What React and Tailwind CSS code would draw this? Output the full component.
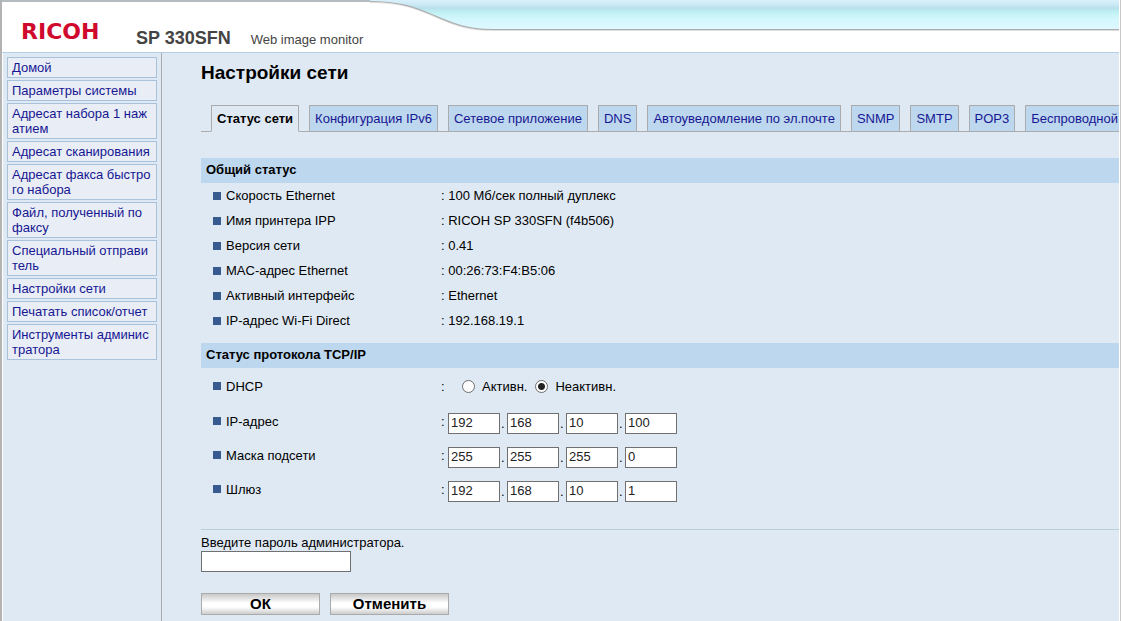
import React, { useState } from 'react';

const menuItems = [
    ['Домой'],
    ['Параметры системы'],
    ['Адресат набора 1 наж', 'атием'],
    ['Адресат сканирования'],
    ['Адресат факса быстро', 'го набора'],
    ['Файл, полученный по', 'факсу'],
    ['Специальный отправи', 'тель'],
    ['Настройки сети'],
    ['Печатать список/отчет'],
    ['Инструменты админис', 'тратора'],
];

const tabs = [
    'Статус сети',
    'Конфигурация IPv6',
    'Сетевое приложение',
    'DNS',
    'Автоуведомление по эл.почте',
    'SNMP',
    'SMTP',
    'POP3',
    'Беспроводной',
];

const statusRows = [
    ['Скорость Ethernet', '100 Мб/сек полный дуплекс'],
    ['Имя принтера IPP', 'RICOH SP 330SFN (f4b506)'],
    ['Версия сети', '0.41'],
    ['MAC-адрес Ethernet', '00:26:73:F4:B5:06'],
    ['Активный интерфейс', 'Ethernet'],
    ['IP-адрес Wi-Fi Direct', '192.168.19.1'],
];

const addressRows = [
    { key: 'ip', label: 'IP-адрес', value: ['192', '168', '10', '100'] },
    { key: 'mask', label: 'Маска подсети', value: ['255', '255', '255', '0'] },
    { key: 'gateway', label: 'Шлюз', value: ['192', '168', '10', '1'] },
];

const Header = () => (
    <header className="relative h-[53px] border-t-2 border-b border-t-[#b4bcc0] border-b-[#b5cfe8] bg-white">
        <div className="absolute -top-0.5 right-0 left-[368px] flex h-8">
            <svg width="122" height="32" viewBox="0 0 122 32" className="shrink-0">
                <defs>
                    <linearGradient id="sky" x1="0" y1="0" x2="0" y2="1">
                        <stop offset="0" stopColor="#d9f0fc" />
                        <stop offset="0.15" stopColor="#cdeaf6" />
                        <stop offset="0.28" stopColor="#b9e1ec" />
                        <stop offset="0.45" stopColor="#c2f2f5" />
                        <stop offset="0.65" stopColor="#d2f7fc" />
                        <stop offset="1" stopColor="#def8fe" />
                    </linearGradient>
                </defs>
                <rect width="122" height="32" fill="#fff" />
                <path d="M0 0H122V29C95 29 82 23 63 15C42 6 30 2 0 1.500Z" fill="url(#sky)" />
                <path d="M0 2.500C30 3 42 7 63 16C82 24 95 30.500 122 30.500" fill="none" stroke="#e4e0de" />
                <path d="M0 1.500C30 2 42 6 63 15C82 23 95 29.500 122 29.500" fill="none" stroke="#abb0b2" strokeWidth="1.200" />
            </svg>
            <div className="h-[31px] flex-1 border-b border-[#e0dedc]">
                <div className="h-[30px] border-b border-[#a9adaf] bg-[linear-gradient(#d9f0fc_0%,#cdeaf6_15%,#b9e1ec_28%,#c2f2f5_45%,#d2f7fc_65%,#def8fe_100%)]" />
            </div>
        </div>
        <div className="flex items-start pt-4 pl-[19px]">
            <span className="w-[115px] font-['DejaVu_Sans'] text-[22px] leading-7 font-bold text-[#cf0a2c]">RICOH</span>
            <span className="flex items-baseline gap-5 pt-1 text-[#444]">
                <span className="text-lg leading-8 font-bold">SP 330SFN</span>
                <span className="pt-0.5">Web image monitor</span>
            </span>
        </div>
    </header>
);

const Sidebar = () => (
    <nav className="w-[159px] shrink-0 border-r border-[#a9abae] px-1 pt-1">
        <ul className="flex flex-col gap-0.5">
            {menuItems.map((lines) => (
                <li key={lines[0]}>
                    <a href="#" className="block border border-[#a8c2db] bg-[#e9eef6] px-1 py-0.5 whitespace-nowrap text-[#171793]">
                        {lines.map((line) => (
                            <span key={line} className="block">{line}</span>
                        ))}
                    </a>
                </li>
            ))}
        </ul>
    </nav>
);

const Label = ({ children }) => (
    <span className="flex items-center gap-[5px] pl-3">
        <span className="size-2 bg-[#375a8f]" />
        {children}
    </span>
);

const SectionTitle = ({ children }) => (
    <h2 className="h-[25px] bg-[#bdd7ee] pl-[5px] leading-6 font-bold">{children}</h2>
);

const App = () => {
    const [dhcp, setDhcp] = useState('off');
    const [addresses, setAddresses] = useState(addressRows);

    const handleOctetChange = (key, index, text) => {
        setAddresses(addresses.map((row) => (
            row.key === key
                ? { ...row, value: row.value.map((v, i) => (i === index ? text : v)) }
                : row
        )));
    };

    const radioClass = "mr-[7px] size-[13px] appearance-none rounded-full border border-[#6b6b6b] bg-white checked:bg-[radial-gradient(circle,#222_0_3px,#fff_4px)]";
    const buttonClass = "h-[22px] w-[119px] border border-[#a9abac] bg-[linear-gradient(#c8c8c8_0%,#fff_45%,#fff_65%,#cccccc_100%)] text-[15px] leading-5 font-bold";

    return (
        <div className="flex min-h-screen flex-col border-r border-l-2 border-r-[#c8c8c8] border-l-[#b3b3b3] bg-white pr-px font-['Liberation_Sans',sans-serif] text-[13px] leading-[15px] text-black">
            <Header />
            <div className="ml-px flex flex-1 bg-[#dfe9f3]">
                <Sidebar />
                <main className="min-w-0 flex-1 overflow-hidden pl-[39px]">
                    <h1 className="pt-2 text-[19px] leading-6 font-bold">Настройки сети</h1>

                    <nav className="mt-5 flex gap-[10px] border-b border-[#a9abac] pl-[10px]">
                        {tabs.map((tab, i) => (
                            <a
                                key={tab}
                                href="#"
                                className={i === 0
                                    ? "-mb-px h-[27px] shrink-0 border border-[#a9abac] border-b-[#dfe9f3] px-[5px] leading-[25px] font-bold whitespace-nowrap"
                                    : "h-[26px] shrink-0 border border-b-0 border-[#a9abac] bg-[#bdd7ee] px-[5px] leading-[25px] whitespace-nowrap text-[#171793]"}
                            >
                                {tab}
                            </a>
                        ))}
                    </nav>

                    <section className="mt-[26px]">
                        <SectionTitle>Общий статус</SectionTitle>
                        <table className="mb-[10px]">
                            <tbody>
                                {statusRows.map(([label, value]) => (
                                    <tr key={label} className="h-[25px]">
                                        <th className="w-60 p-0 text-left font-normal"><Label>{label}</Label></th>
                                        <td className="p-0">: {value}</td>
                                    </tr>
                                ))}
                            </tbody>
                        </table>
                    </section>

                    <section>
                        <SectionTitle>Статус протокола TCP/IP</SectionTitle>
                        <div className="flex h-9 items-center">
                            <div className="w-60"><Label>DHCP</Label></div>
                            <span className="w-[21px]">:</span>
                            <label className="flex items-center">
                                <input type="radio" name="dhcp" checked={dhcp === 'on'} onChange={() => setDhcp('on')} className={radioClass} />
                                Активн.
                            </label>
                            <label className="ml-2 flex items-center">
                                <input type="radio" name="dhcp" checked={dhcp === 'off'} onChange={() => setDhcp('off')} className={radioClass} />
                                Неактивн.
                            </label>
                        </div>
                        {addresses.map((row) => (
                            <div key={row.key} className="flex h-[34px] items-center">
                                <div className="w-60"><Label>{row.label}</Label></div>
                                <span className="w-[7px]">:</span>
                                <div className="flex items-center pt-1">
                                    {row.value.map((octet, i) => (
                                        <React.Fragment key={i}>
                                            {i > 0 && <span className="w-[7px] pl-px">.</span>}
                                            <input
                                                type="text"
                                                aria-label={`${row.label} ${i + 1}`}
                                                value={octet}
                                                onChange={(e) => handleOctetChange(row.key, i, e.target.value)}
                                                className="h-[21px] w-[52px] border border-[#707070] bg-white px-0.5 pb-0.5 text-[#222]"
                                            />
                                        </React.Fragment>
                                    ))}
                                </div>
                            </div>
                        ))}
                    </section>

                    <form className="mt-[23px] border-t border-[#b9d0dc] pt-[5px] pb-1" onSubmit={(e) => e.preventDefault()}>
                        <label htmlFor="password" className="block pb-px">Введите пароль администратора.</label>
                        <input id="password" type="password" className="block h-[21px] w-[150px] border border-[#707070] bg-white px-0.5" />
                        <div className="mt-[21px] flex gap-[10px]">
                            <button type="submit" className={buttonClass}>ОК</button>
                            <button type="button" className={buttonClass}>Отменить</button>
                        </div>
                    </form>
                </main>
            </div>
        </div>
    );
};

export default App;
